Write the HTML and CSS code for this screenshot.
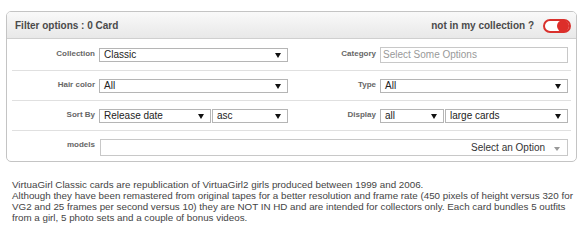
FILE: index.html
```
<!DOCTYPE html>
<html lang="en">
<head>
    <meta charset="UTF-8">
    <title>Filter options</title>
    <link rel="stylesheet" href="styles.css">
</head>
<body>
    <div class="panel">
        <div class="panel-header">
            <span class="panel-title">Filter options : 0 Card</span>
            <div class="toggle-wrap">
                <span class="toggle-label">not in my collection ?</span>
                <span class="toggle"><span class="knob"></span></span>
            </div>
        </div>
        <div class="panel-body">
            <div class="filter-row">
                <label class="field-label">Collection</label>
                <div class="select">Classic</div>
                <label class="field-label">Category</label>
                <div class="select multi placeholder">Select Some Options</div>
            </div>
            <div class="filter-row">
                <label class="field-label">Hair color</label>
                <div class="select">All</div>
                <label class="field-label">Type</label>
                <div class="select">All</div>
            </div>
            <div class="filter-row">
                <label class="field-label">Sort By</label>
                <div class="select-pair sort">
                    <div class="select">Release date</div>
                    <div class="select">asc</div>
                </div>
                <label class="field-label">Display</label>
                <div class="select-pair display">
                    <div class="select">all</div>
                    <div class="select">large cards</div>
                </div>
            </div>
            <div class="filter-row last">
                <label class="field-label">models</label>
                <div class="models-input">
                    <span class="chosen-text">Select an Option</span>
                    <span class="chosen-arrow"></span>
                </div>
            </div>
        </div>
    </div>

    <div class="description">
        VirtuaGirl Classic cards are republication of VirtuaGirl2 girls produced between 1999 and 2006.<br>
        Although they have been remastered from original tapes for a better resolution and frame rate (450 pixels of height versus 320 for VG2 and 25 frames per second versus 10) they are NOT IN HD and are intended for collectors only. Each card bundles 5 outfits from a girl, 5 photo sets and a couple of bonus videos.
    </div>
</body>
</html>
```

FILE: styles.css
```
/* styles.css */
body {
    font-family: Arial, "Liberation Sans", sans-serif;
    background-color: #fff;
    margin: 0;
    padding: 11px 8px 0 6px;
    color: #444;
}

.panel {
    width: 569px;
    border: 1px solid #c4c4c4;
    border-radius: 5px;
    background-color: #fff;
    overflow: hidden;
}

.panel-header {
    height: 26px;
    display: flex;
    justify-content: space-between;
    align-items: center;
    padding: 0 5px 0 8px;
    background: linear-gradient(#f9f9f9, #e8e8e8);
    border-bottom: 1px solid #cfcfcf;
}

.panel-title,
.toggle-label {
    font-size: 10px;
    font-weight: bold;
    color: #4a4a4a;
}

.toggle-wrap {
    display: flex;
    align-items: center;
    gap: 9px;
    padding-top: 1px;
}

.toggle {
    width: 24px;
    height: 10px;
    border: 2px solid #d9302c;
    border-radius: 8px;
    background-color: #fff;
    display: flex;
    justify-content: flex-end;
    align-items: center;
}

.knob {
    width: 12px;
    height: 12px;
    border-radius: 50%;
    background-color: #dd2e2a;
}

.panel-body {
    padding: 1px 5px 5px 5px;
}

.filter-row {
    display: grid;
    grid-template-columns: 83px 189px 84px 188px;
    column-gap: 4px;
    align-items: start;
    padding: 8px 0 7px;
    border-bottom: 1px solid #e0e0e0;
}

.filter-row.last {
    border-bottom: none;
    padding-bottom: 0;
}

.field-label {
    text-align: right;
    font-size: 8px;
    font-weight: bold;
    color: #666;
    padding-top: 1px;
}

.select {
    position: relative;
    height: 12px;
    line-height: 12px;
    border: 1px solid #b5b5b5;
    background-color: #fff;
    font-size: 10px;
    color: #222;
    padding-left: 4px;
    white-space: nowrap;
    overflow: hidden;
}

.select::after {
    content: "";
    position: absolute;
    right: 6px;
    top: 4px;
    border-left: 3px solid transparent;
    border-right: 3px solid transparent;
    border-top: 5px solid #111;
}

.select.multi {
    height: 14px;
    line-height: 14px;
    margin-top: -1px;
    border-color: #c8c8c8;
    padding-left: 2px;
}

.select.multi::after {
    display: none;
}

.placeholder {
    color: #999;
}

.select-pair {
    display: grid;
    column-gap: 1px;
}

.select-pair.sort {
    grid-template-columns: 112px 76px;
}

.select-pair.display {
    grid-template-columns: 64px 123px;
}

.models-input {
    grid-column: 2 / 5;
    height: 15px;
    border: 1px solid #c8c8c8;
    display: flex;
    justify-content: flex-end;
    align-items: center;
    padding-right: 7px;
    margin-left: 1px;
}

.chosen-text {
    font-size: 10px;
    color: #333;
}

.chosen-arrow {
    margin-left: 9px;
    margin-top: 2px;
    border-left: 3px solid transparent;
    border-right: 3px solid transparent;
    border-top: 4px solid #999;
}

.description {
    margin: 17px 0 0 6px;
    width: 567px;
    font-size: 9.8px;
    line-height: 11px;
    color: #444;
}
```
